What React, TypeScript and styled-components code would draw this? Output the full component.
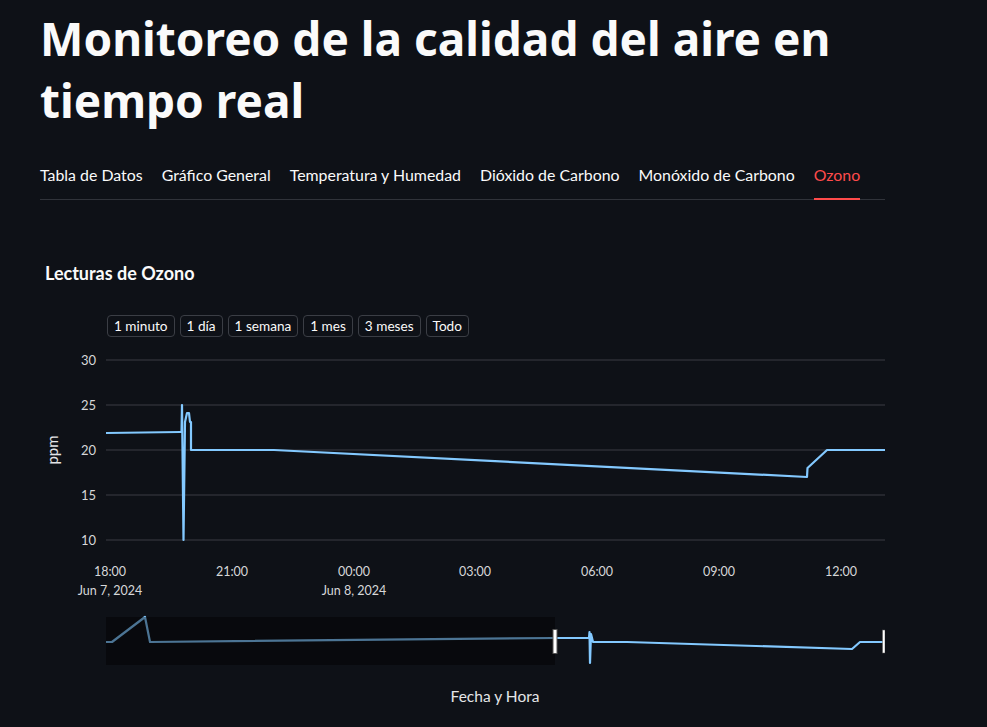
import styled, { createGlobalStyle } from 'styled-components';

const GlobalStyle = createGlobalStyle`
  html, body {
    margin: 0;
    padding: 0;
    background: #0e1117;
    color: #fafafa;
    font-family: Lato, "Noto Sans", "DejaVu Sans", sans-serif;
  }
`;

const Page = styled.div`
  width: 845px;
  padding: 0 40px;
`;

const Title = styled.h1`
  margin: 0;
  padding-top: 7px;
  font-family: "Noto Sans", Lato, sans-serif;
  font-size: 46px;
  line-height: 62px;
  font-weight: 700;
`;

const TabList = styled.div`
  display: flex;
  gap: 19px;
  margin-top: 29px;
  border-bottom: 1px solid #30333a;
`;

const Tab = styled.div<{ $active?: boolean }>`
  height: 40px;
  box-sizing: border-box;
  display: flex;
  align-items: center;
  padding-bottom: 10px;
  margin-bottom: -1px;
  font-size: 15.9px;
  color: ${(p) => (p.$active ? '#ff4b4b' : '#fafafa')};
  border-bottom: 2px solid ${(p) => (p.$active ? '#ff4b4b' : 'transparent')};
`;

const Section = styled.section`
  margin-top: 61px;
`;

const SubTitle = styled.h3`
  margin: 0 0 0 5px;
  font-size: 18px;
  line-height: 24px;
  font-weight: 700;
`;

const RangeButtons = styled.div`
  display: flex;
  gap: 5px;
  margin: 30px 0 0 67px;
`;

const RangeButton = styled.button`
  height: 22px;
  padding: 0 6px;
  background: transparent;
  border: 1px solid #3b3e45;
  border-radius: 4px;
  color: #fafafa;
  font-family: inherit;
  font-size: 13.6px;
`;

const Chart = styled.svg`
  display: block;
  margin-top: 1px;
  font-family: Lato, "Noto Sans", sans-serif;
`;

const tabs = [
  'Tabla de Datos',
  'Gráfico General',
  'Temperatura y Humedad',
  'Dióxido de Carbono',
  'Monóxido de Carbono',
  'Ozono',
];

const ranges = ['1 minuto', '1 día', '1 semana', '1 mes', '3 meses', 'Todo'];

const yTicks = [
  { v: 30, y: 360 },
  { v: 25, y: 405 },
  { v: 20, y: 450 },
  { v: 15, y: 495 },
  { v: 10, y: 540 },
];

const xTicks = [
  { t: '18:00', x: 110, d: 'Jun 7, 2024' },
  { t: '21:00', x: 232 },
  { t: '00:00', x: 354, d: 'Jun 8, 2024' },
  { t: '03:00', x: 475 },
  { t: '06:00', x: 597 },
  { t: '09:00', x: 719 },
  { t: '12:00', x: 841 },
];

const mainLine = [
  [106, 433], [180, 432], [181.5, 432], [182, 405], [183.5, 540], [185, 422],
  [187, 413], [189, 413], [190, 422], [191, 422], [191, 450], [274, 450],
  [807, 477], [807.5, 468], [827, 450], [885, 450],
];

const sliderLine = [
  [106, 642], [112, 642], [145, 617], [150, 642], [555, 638], [589, 638],
  [589.5, 632], [590, 663], [591, 634], [593, 642], [627, 642], [852, 649],
  [860, 642], [884, 642],
];

const pts = (a: number[][]) => a.map((p) => p.join(',')).join(' ');

function OzoneChart() {
  return (
    <Chart width={845} height={380} viewBox="40 338 845 380">
      {yTicks.map((t) => (
        <g key={t.v}>
          <line x1={106} x2={885} y1={t.y} y2={t.y} stroke="#3a3d44" strokeWidth={1} />
          <text x={96} y={t.y + 4.5} textAnchor="end" fontSize={13} fill="#d6d7d9">
            {t.v}
          </text>
        </g>
      ))}
      <text x={58} y={450} fontSize={15} fill="#e4e5e7" textAnchor="middle" transform="rotate(-90 58 450)">
        ppm
      </text>
      {xTicks.map((t) => (
        <g key={t.t}>
          <text x={t.x} y={576} fontSize={12.5} fill="#d6d7d9" textAnchor="middle">
            {t.t}
          </text>
          {t.d && (
            <text x={t.x} y={594.5} fontSize={12.5} fill="#d6d7d9" textAnchor="middle">
              {t.d}
            </text>
          )}
        </g>
      ))}
      <polyline points={pts(mainLine)} fill="none" stroke="#83c9ff" strokeWidth={2.2} strokeLinejoin="round" />

      <polyline points={pts(sliderLine)} fill="none" stroke="#83c9ff" strokeWidth={2.2} strokeLinejoin="round" />
      <rect x={106} y={617} width={449} height={48} fill="#000" opacity={0.42} />
      <rect x={553} y={629.5} width={4} height={24} fill="#fff" stroke="#555" strokeWidth={1} />
      <rect x={882.5} y={630} width={2.5} height={23} fill="#fff" stroke="#555" strokeWidth={0.5} />

      <text x={495} y={702} fontSize={15.5} fill="#e4e5e7" textAnchor="middle">
        Fecha y Hora
      </text>
    </Chart>
  );
}

export default function App() {
  return (
    <>
      <GlobalStyle />
      <Page>
        <Title>
          Monitoreo de la calidad del aire en
          <br />
          tiempo real
        </Title>
        <TabList>
          {tabs.map((t) => (
            <Tab key={t} $active={t === 'Ozono'}>
              {t}
            </Tab>
          ))}
        </TabList>
        <Section>
          <SubTitle>Lecturas de Ozono</SubTitle>
          <RangeButtons>
            {ranges.map((r) => (
              <RangeButton key={r}>{r}</RangeButton>
            ))}
          </RangeButtons>
          <OzoneChart />
        </Section>
      </Page>
    </>
  );
}
